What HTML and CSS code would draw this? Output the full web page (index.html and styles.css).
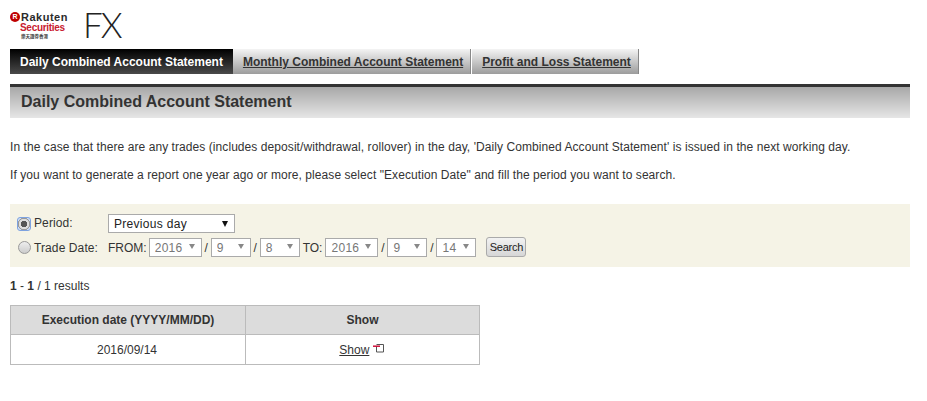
FILE: index.html
```html
<!DOCTYPE html>
<html lang="en">
<head>
<meta charset="UTF-8">
<title>Daily Combined Account Statement</title>
<link rel="stylesheet" href="styles.css">
</head>
<body>

<div class="wrapper">

<!-- Logo -->
<div class="logo-row">
<div class="logo">
<div class="logo-main"><span class="logo-mark">R</span>Rakuten</div>
<div class="logo-sub">Securities</div>
<div class="logo-cjk">樂天證券香港</div>
</div>
<div class="product">FX</div>
</div>

<!-- Tabs -->
<div class="tabs">
<a class="tab tab-active">Daily Combined Account Statement</a>
<a class="tab" href="#">Monthly Combined Account Statement</a>
<a class="tab" href="#">Profit and Loss Statement</a>
</div>

<h1 class="page-title">Daily Combined Account Statement</h1>

<p class="note">In the case that there are any trades (includes deposit/withdrawal, rollover) in the day, 'Daily Combined Account Statement' is issued in the next working day.</p>
<p class="note">If you want to generate a report one year ago or more, please select "Execution Date" and fill the period you want to search.</p>

<!-- Search form -->
<form class="search-box">
<div class="form-row">
<label class="radio-label"><input type="radio" name="mode" class="radio radio-on" checked><span class="period-text">Period:</span></label>
<span class="select select-period"><select><option>Previous day</option></select></span>
</div>
<div class="form-row">
<label class="radio-label"><input type="radio" name="mode" class="radio">Trade Date:</label>
<span class="range-label">FROM:</span>
<span class="select select-year off"><select disabled><option>2016</option></select></span>
<span class="sep">/</span>
<span class="select select-short off"><select disabled><option>9</option></select></span>
<span class="sep">/</span>
<span class="select select-short off"><select disabled><option>8</option></select></span>
<span class="range-label to">TO:</span>
<span class="select select-year off"><select disabled><option>2016</option></select></span>
<span class="sep">/</span>
<span class="select select-short off"><select disabled><option>9</option></select></span>
<span class="sep">/</span>
<span class="select select-short off"><select disabled><option>14</option></select></span>
<button type="button" class="search-btn">Search</button>
</div>
</form>

<div class="results"><b>1</b> - <b>1</b> / 1 results</div>

<table class="result-table">
<tr>
<th class="col-date">Execution date (YYYY/MM/DD)</th>
<th>Show</th>
</tr>
<tr>
<td>2016/09/14</td>
<td><a href="#">Show</a>
<svg class="popup-icon" width="11" height="9" viewBox="0 0 11 9"><path d="M3.5 .5h7v7.5h-7v-6" fill="none" stroke="#555"/><path d="M0 2.2h7" stroke="#d0103a" stroke-width="1.5"/></svg>
</td>
</tr>
</table>

</div>

</body>
</html>
```

FILE: styles.css
```css
* {
margin: 0;
padding: 0;
box-sizing: border-box;
}

body {
background: #fff;
color: #333;
font-family: "Liberation Sans", Arial, sans-serif;
font-size: 12px;
}

.wrapper {
width: 910px;
padding-left: 10px;
}

/* Logo */
.logo-row {
height: 49px;
display: flex;
align-items: flex-start;
}

.logo {
width: 73px;
padding-top: 11px;
line-height: 1;
}

.logo-main {
display: flex;
align-items: center;
font-size: 11px;
font-weight: bold;
color: #2b2b2b;
letter-spacing: 0.5px;
height: 12px;
}

.logo-mark {
width: 10px;
height: 10px;
border-radius: 50%;
background: #bf0000;
color: #fff;
font-size: 7px;
line-height: 10px;
text-align: center;
margin-right: 1px;
letter-spacing: 0;
}

.logo-sub {
font-size: 10px;
font-weight: bold;
color: #c8202f;
padding-left: 10px;
height: 10px;
letter-spacing: -0.3px;
}

.logo-cjk {
font-family: "Noto Sans CJK TC", sans-serif;
font-size: 4.5px;
font-weight: bold;
color: #444;
padding-left: 11px;
margin-top: 1px;
}

.product {
font-family: Lato, "Open Sans", sans-serif;
font-weight: 300;
font-size: 35px;
line-height: 36px;
letter-spacing: -2px;
color: #222;
margin-top: 6px;
}

/* Tabs */
.tabs {
display: flex;
height: 25px;
}

.tab {
display: block;
padding: 1px 7px 0 10px;
line-height: 25px;
font-weight: bold;
font-size: 12px;
color: #333;
border-right: 1px solid #888;
background: linear-gradient(#f4f4f4, #9c9c9c);
}

.tab + .tab + .tab {
border-left: 1px solid #fff;
}

.tab-active {
color: #fff;
padding: 1px 10px 0;
border: none;
background: linear-gradient(#000, #4a4a4a);
}

.page-title {
margin-top: 10px;
height: 34px;
border-top: 3px solid #333;
padding-left: 11px;
font-size: 16px;
line-height: 29px;
background: linear-gradient(#a8a8a8, #e6e6e6);
}

.note {
margin-top: 14px;
line-height: 14px;
letter-spacing: 0.07px;
}

.note:first-of-type {
margin-top: 22px;
}

/* Search form */
.search-box {
margin-top: 22px;
height: 63px;
padding: 10px 8px 0;
background: #f5f3e6;
}

.form-row {
display: flex;
align-items: center;
height: 19px;
}

.form-row + .form-row {
margin-top: 5px;
}

.radio-label {
display: flex;
align-items: center;
width: 90px;
letter-spacing: 0.1px;
}

.period-text {
margin-bottom: 2px;
}

.radio {
appearance: none;
width: 13px;
height: 13px;
margin-right: 3px;
border-radius: 50%;
border: 1px solid #999;
background: linear-gradient(#eee, #ccc);
}

.radio-on {
width: 14px;
height: 14px;
margin: 0 3px 0 -1px;
border: 1px solid #7da2e0;
border-radius: 3px;
background: radial-gradient(circle, #555 0 3px, #ddd 3.5px 5px, #999 5.5px 6px, #cfe0f8 6.5px);
}

.range-label {
margin-right: 2px;
}

.range-label.to {
margin: 0 3px;
}

.sep {
width: 9px;
text-align: center;
color: #333;
}

.select {
display: block;
position: relative;
height: 19px;
border: 1px solid #aaa;
background: #fff;
}

.select select {
appearance: none;
display: block;
width: 100%;
height: 17px;
border: none;
background: transparent;
font: 12px "Liberation Sans", Arial, sans-serif;
color: #222;
padding-left: 5px;
letter-spacing: 0.3px;
}

.select::after {
content: "";
position: absolute;
right: 6px;
top: 6px;
border-left: 3px solid transparent;
border-right: 3px solid transparent;
border-top: 6px solid #111;
}

.off select {
color: #777;
opacity: 1;
}

.off::after {
border-top-color: #888;
top: 5px;
border-top-width: 5px;
}

.select-period {
width: 127px;
}

.select-year {
width: 53px;
}

.select-short {
width: 40px;
}

.search-btn {
margin: -1px 0 0 10px;
width: 40px;
height: 20px;
border: 1px solid #aaa;
border-radius: 3px;
background: linear-gradient(#f2f2f2, #d6d6d6);
font: 11px "Liberation Sans", Arial, sans-serif;
letter-spacing: -0.2px;
color: #222;
}

/* Results */
.results {
margin-top: 12px;
line-height: 14px;
}

.result-table {
margin-top: 12px;
width: 470px;
border-collapse: collapse;
table-layout: fixed;
}

.result-table th, .result-table td {
border: 1px solid #bbb;
height: 29px;
text-align: center;
font-size: 12px;
}

.result-table td {
height: 30px;
padding-right: 2px;
}

.result-table th {
background: #dcdcdc;
}

.col-date {
width: 235px;
}

.result-table a {
color: #333;
}

.popup-icon {
vertical-align: 1px;
}
```
